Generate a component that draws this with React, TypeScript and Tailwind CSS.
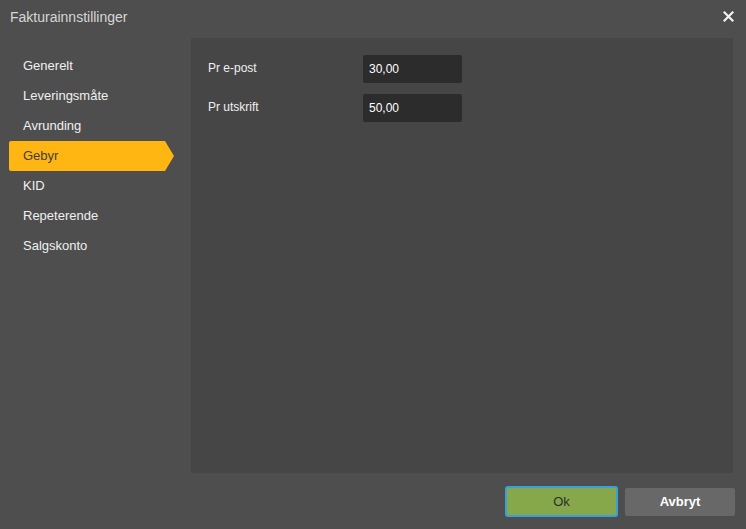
import React, { useState } from 'react';

const menuItems = [
  'Generelt',
  'Leveringsmåte',
  'Avrunding',
  'Gebyr',
  'KID',
  'Repeterende',
  'Salgskonto',
];

const fees = [
  { label: 'Pr e-post', value: '30,00' },
  { label: 'Pr utskrift', value: '50,00' },
];

export default function App() {
  const [active, setActive] = useState('Gebyr');

  return (
    <div
      className="w-[746px] h-[529px] bg-[#4e4e4e] text-[#e6e6e6] flex flex-col overflow-hidden"
      style={{ fontFamily: '"Liberation Sans", Arial, sans-serif' }}
    >
      {/* Title bar */}
      <div className="h-[38px] flex items-start justify-between pl-[10px] pr-[12px] pt-[7px]">
        <span className="text-[14px] text-[#d6d6d6]">Fakturainnstillinger</span>
        <svg width="11" height="11" viewBox="0 0 11 11" className="mt-[4px]">
          <path d="M1.5 1.5 L9.5 9.5 M9.5 1.5 L1.5 9.5" stroke="#f2f2f2" strokeWidth="2.2" strokeLinecap="square" />
        </svg>
      </div>

      {/* Body */}
      <div className="flex h-[435px]">
        {/* Menu */}
        <div className="w-[191px] pl-[9px] pt-[13px] flex flex-col">
          {menuItems.map((item) =>
            item === active ? (
              <div
                key={item}
                className="h-[30px] w-[165px] bg-[#ffb612] text-[#3f3f3f] text-[13px] flex items-center pl-[14px] [clip-path:polygon(0_0,156px_0,165px_50%,156px_100%,0_100%)] rounded-l-[2px]"
              >
                {item}
              </div>
            ) : (
              <button
                key={item}
                onClick={() => setActive(item)}
                className="h-[30px] text-left text-[13px] text-[#f0f0f0] pl-[14px]"
              >
                {item}
              </button>
            )
          )}
        </div>

        {/* Content panel */}
        <div className="w-[542px] bg-[#464646] pt-[17px] pl-[17px] flex flex-col gap-[11px]">
          {fees.map((f) => (
            <div key={f.label} className="flex items-center">
              <span className="w-[155px] text-[12px] text-[#f0f0f0] -mt-[3px]">{f.label}</span>
              <input
                defaultValue={f.value}
                className="w-[99px] h-[28px] bg-[#2c2c2c] rounded-[2px] text-[12px] text-white pl-[6px] outline-none"
              />
            </div>
          ))}
        </div>
      </div>

      {/* Footer */}
      <div className="flex justify-end items-center gap-[7px] pr-[11px] pt-[13px]">
        <button className="w-[113px] h-[31px] bg-[#86a84a] border-2 border-[#3aa0dc] rounded-[3px] text-[13px] text-[#2e2e2e]">
          Ok
        </button>
        <button className="w-[110px] h-[28px] bg-[#686868] rounded-[2px] text-[13px] font-bold text-white">
          Avbryt
        </button>
      </div>
    </div>
  );
}
